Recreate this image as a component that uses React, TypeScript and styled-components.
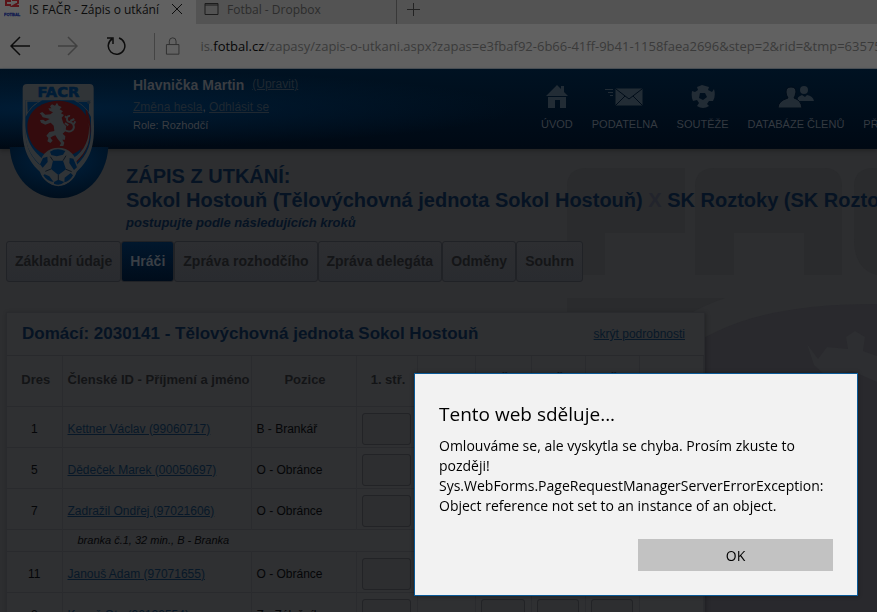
import React from "react";
import styled, { createGlobalStyle } from "styled-components";

const ui = '"Open Sans", "Noto Sans", sans-serif';
const web = '"Liberation Sans", Arial, sans-serif';

const GlobalStyle = createGlobalStyle`
  * { box-sizing: border-box; }
  body { margin: 0; overflow: hidden; background: #2d2e30; }
  button, input { font: inherit; color: inherit; }
`;

const Page = styled.div`
  display: flex;
  flex-direction: column;
  height: 100vh;
  overflow: hidden;
  font-family: ${web};
  font-size: 12px;
  color: #050608;
`;

/* Browser window */
const TabStrip = styled.div`
  display: flex;
  flex: none;
  height: 24px;
  background: #535353;
  font-family: ${ui};
  font-size: 12px;
`;

const BrowserTab = styled.div<{ $active?: boolean }>`
  display: flex;
  align-items: center;
  gap: 8px;
  flex: none;
  width: ${(p) => (p.$active ? 196 : 201)}px;
  padding: 0 0 6px ${(p) => (p.$active ? 4 : 8)}px;
  border-right: ${(p) => (p.$active ? "0" : "1px solid #383838")};
  background: ${(p) => (p.$active ? "#616161" : "none")};
  color: ${(p) => (p.$active ? "#0c0c0c" : "#2c2c2c")};
  white-space: nowrap;
`;

const IconButton = styled.button`
  display: flex;
  align-items: center;
  justify-content: center;
  padding: 0;
  border: 0;
  background: none;
`;

const CloseTab = styled(IconButton)`
  margin-left: 4px;
`;

const NewTab = styled(IconButton)`
  width: 32px;
  height: 18px;
`;

const Toolbar = styled.div`
  display: flex;
  flex: none;
  align-items: center;
  height: 45px;
  background: #616161;
  border-bottom: 1px solid #4a5056;
  font-family: ${ui};
  font-size: 13px;
`;

const NavButton = styled(IconButton)`
  flex: 0 0 48px;
  height: 40px;
  padding-right: 8px;
`;

const Divider = styled.div`
  flex: none;
  width: 1px;
  height: 27px;
  margin: 0 10px;
  background: #444;
`;

const Address = styled.div`
  margin-left: 20px;
  overflow: hidden;
  white-space: nowrap;
  color: #3a3a3a;
  b { font-weight: 400; color: #060606; }
`;

/* Site header */
const Header = styled.header`
  position: relative;
  z-index: 1;
  display: flex;
  flex: none;
  height: 80px;
  padding-left: 133px;
  background: linear-gradient(to bottom, #001222, #000914);
  border-bottom: 1px solid #020a14;
  box-shadow: 0 2px 4px rgba(0, 0, 0, 0.25);
`;

const HeaderGlow = styled.div`
  position: absolute;
  inset: 0 auto 0 0;
  width: 520px;
  background: radial-gradient(ellipse at 10% 50%, rgba(0, 32, 60, 0.8), transparent 70%);
`;

const Logo = styled.svg`
  position: absolute;
  left: 5px;
  top: 6px;
`;

const User = styled.div`
  position: relative;
  flex: 0 0 408px;
  padding-top: 7px;
  color: #3a3d42;
  a { color: #1f2831; }
`;

const UserName = styled.div`
  display: flex;
  gap: 8px;
  height: 20px;
  line-height: 18px;
  font-size: 14px;
  font-weight: 700;
  a { font-size: 12px; font-weight: 400; line-height: 16px; }
`;

const UserLine = styled.div<{ $small?: boolean }>`
  line-height: ${(p) => (p.$small ? 14 : 22)}px;
  font-size: ${(p) => (p.$small ? 11 : 12)}px;
`;

const Menu = styled.nav`
  position: relative;
  display: flex;
  gap: 19px;
  padding-top: 15px;
`;

const MenuLink = styled.a`
  display: flex;
  flex-direction: column;
  align-items: center;
  gap: 9px;
  color: #343a41;
  font-size: 11px;
  line-height: 14px;
  text-decoration: none;
  white-space: nowrap;
  svg { color: #222c35; }
`;

/* Match report */
const Main = styled.main`
  position: relative;
  flex: 1;
  min-height: 0;
  padding: 15px 6px 0;
  background: #2d2e30;
`;

const Watermark = styled.svg`
  position: absolute;
  left: 567px;
  top: 0;
`;

const Titles = styled.div`
  position: relative;
  padding-left: 120px;
  white-space: nowrap;
  color: #061323;
`;

const Title = styled.h1`
  margin: 0;
  font-size: 20px;
  line-height: 24px;
  span { color: #22242c; }
`;

const Hint = styled.p`
  margin: 0;
  font-size: 13px;
  font-weight: 700;
  font-style: italic;
  line-height: 22px;
`;

const Steps = styled.div`
  position: relative;
  display: flex;
  margin-top: 7px;
`;

const Step = styled.button<{ $active?: boolean }>`
  height: 41px;
  padding: 0 8px 2px;
  border: 1px solid #202226;
  border-radius: 3px;
  background: ${(p) => (p.$active ? "linear-gradient(#01172d, #000c1a)" : "linear-gradient(#2d2e31, #292b2f)")};
  color: ${(p) => (p.$active ? "#3a3f45" : "#141517")};
  font-size: 14px;
  font-weight: 700;
  white-space: nowrap;
`;

const Panel = styled.section`
  position: relative;
  max-width: 699px;
  margin-top: 30px;
  border: 1px solid #292a2d;
  background: #2f3032;
  box-shadow: 1px 1px 4px rgba(0, 0, 0, 0.25);
`;

const PanelHead = styled.div`
  display: flex;
  align-items: center;
  justify-content: space-between;
  height: 43px;
  padding: 0 19px 0 15px;
  border-bottom: 1px solid #28292c;
  a { color: #081828; }
`;

const PanelTitle = styled.h2`
  margin: 0;
  font-size: 17px;
  color: #061323;
`;

const Players = styled.table`
  width: 100%;
  table-layout: fixed;
  border-collapse: collapse;
`;

const Th = styled.th<{ $left?: boolean }>`
  height: 50px;
  padding: 0 0 2px ${(p) => (p.$left ? 5 : 3)}px;
  border-right: 1px solid #2a2b2e;
  border-bottom: 1px solid #292a2d;
  color: #131416;
  font-size: 13px;
  text-align: ${(p) => (p.$left ? "left" : "center")};
  white-space: nowrap;
`;

const Row = styled.tr`
  height: 41px;
  border-bottom: 1px solid #292a2d;
`;

const NoteRow = styled(Row)`
  height: 22px;
  font-size: 11px;
  font-style: italic;
`;

const Td = styled.td<{ $center?: boolean }>`
  padding: 4px 0 0 ${(p) => (p.$center ? 0 : 5)}px;
  border-right: 1px solid #2a2b2e;
  text-align: ${(p) => (p.$center ? "center" : "left")};
  white-space: nowrap;
  a { color: #081828; }
`;

const NoteCell = styled.td`
  padding-left: 15px;
`;

const Minute = styled.input`
  display: block;
  width: calc(100% - 6px);
  height: 32px;
  margin: 0;
  border: 1px solid #222326;
  border-radius: 3px;
  background: #2d2e30;
`;

/* Alert */
const Overlay = styled.div`
  position: fixed;
  inset: 0;
  z-index: 2;
  display: flex;
  align-items: flex-end;
  justify-content: flex-end;
  padding: 0 19px 16px;
`;

const Dialog = styled.div`
  display: flex;
  flex-direction: column;
  width: 444px;
  max-width: 100%;
  padding: 26px 24px 24px;
  border: 1px solid #0a5a98;
  background: #f2f2f2;
  color: #000;
  font-family: ${ui};
  box-shadow: 0 0 4px rgba(0, 0, 0, 0.4);
`;

const DialogTitle = styled.h3`
  margin: 0 0 8px;
  font-size: 19px;
  font-weight: 400;
  line-height: 28px;
`;

const Message = styled.p`
  margin: 0 0 23px;
  font-size: 14px;
  line-height: 20px;
`;

const Ok = styled.button`
  align-self: flex-end;
  width: 195px;
  height: 32px;
  border: 0;
  background: #c2c2c2;
  font-size: 14px;
`;

const Stroke = ({ d, w = 20, h = 20, color = "#0c0c0c", sw = 1.5 }: { d: string; w?: number; h?: number; color?: string; sw?: number }) => (
  <svg width={w} height={h} viewBox={`0 0 ${w} ${h}`} fill="none" stroke={color} strokeWidth={sw} aria-hidden="true">
    <path d={d} />
  </svg>
);

const Favicon = () => (
  <svg width="17" height="18" viewBox="0 0 17 18" aria-hidden="true">
    <path d="M7 1H2V5H7M8 0H14V3L9 6H15" fill="none" stroke="#5a1418" strokeWidth="2" />
    <text x="0" y="16" fontFamily="Liberation Sans" fontSize="4" fontWeight="700" fill="#121c50" stroke="#121c50" strokeWidth="0.3">FOTBAL</text>
  </svg>
);

const ClubLogo = () => (
  <Logo width="110" height="130" viewBox="0 0 330 390" role="img" aria-label="FAČR">
    <defs>
      <radialGradient id="badge" cx="0.5" cy="0.25" r="0.75">
        <stop offset="0" stopColor="#00213f" />
        <stop offset="1" stopColor="#000e1c" />
      </radialGradient>
    </defs>
    <path d="M14 216C20 312 88 370 162 370S304 312 310 216Z" fill="url(#badge)" />
    <path d="M53 40Q53 27 66 27H254Q266 27 266 40V130C270 198 264 246 214 292Q196 332 160 334Q124 332 106 292C56 246 50 198 53 130Z" fill="#303437" />
    <text x="160" y="67" textAnchor="middle" fontFamily="DejaVu Sans" fontSize="44" fontWeight="700" fill="#001c36" stroke="#001c36" strokeWidth="2">FACR</text>
    <path d="M61 76H258V150C261 200 251 240 209 275L160 300L111 275C68 240 60 200 61 150Z" fill="#001f3b" />
    <path d="M242 98C270 150 258 235 207 267Q246 210 242 98Z" fill="#340b0d" />
    <path d="M61 76H112Q78 92 62 126ZM258 76H206Q242 92 258 126Z" fill="#303437" />
    <path d="M67 80H101Q80 91 68 112ZM252 80H217Q238 91 252 112Z" fill="#001f3b" />
    <path d="M160 77C218 80 249 113 251 155C253 205 222 245 160 245S68 204 67 155C67 112 102 80 160 77Z" fill="#340b0d" />
    <path d="M61 150C64 205 88 230 116 254L109 272C70 238 58 203 61 150ZM251 142C257 191 238 230 204 250L213 260C246 231 262 193 251 142Z" fill="#303437" />
    <path fill="#303437" d="M141 88L150 92L156 83L161 92L170 96L164 103L174 109L168 115L177 120L170 128L175 145L184 154L181 169L173 176L181 184L180 194L172 194L178 203L175 213L164 213L168 204L158 192L151 181L143 184L136 188L143 197L136 204L127 199L130 189L124 182L133 171L148 168L146 152L137 143L121 149L108 143L105 135L115 134L121 139L134 132L126 130L113 127L109 120L104 115L112 111L121 119L136 118L144 112L134 107L130 100L139 100L135 94Z" />
    <path d="M176 163C195 178 211 164 205 149C199 136 184 147 186 130Q188 121 195 123M190 151L180 144M204 151L211 139M188 131L180 124M196 138L208 132" fill="none" stroke="#303437" strokeWidth="6" />
    <circle cx="160" cy="275" r="57" fill="#303437" />
    <g fill="#001c36">
      <path d="M144 257H174L183 283L160 300L138 282Z" />
      <path d="M135 230Q156 217 181 228L174 239L155 244L139 240ZM114 249L127 245L128 261L113 278L105 268ZM205 251L216 277L207 285L193 264L194 249ZM119 298L133 304L146 321Q126 319 115 301ZM179 308L197 294L204 301Q194 319 178 322ZM147 321L160 314L178 321Q165 334 147 326Z" />
    </g>
    <path d="M138 282L121 289M183 283L200 290M144 257L136 245M174 257L183 242M160 300V316" stroke="#0e1721" strokeWidth="3" />
    <circle cx="251" cy="82" r="5" fill="#182633" />
  </Logo>
);

const HomeIcon = () => (
  <svg width="24" height="24" viewBox="0 0 24 24" fill="currentColor" aria-hidden="true">
    <path d="M12 1L16 5V2H19V8L23 12H1ZM3 13H21V24H15V16H10V24H3Z" />
  </svg>
);
const MailIcon = () => (
  <svg width="40" height="24" viewBox="0 0 40 24" fill="none" stroke="currentColor" aria-hidden="true">
    <path d="M0 5.5H8M3 8.5H8M5 11.5H8" />
    <path d="M11 5H37V21H11Z" fill="currentColor" />
    <path d="M11 5L24 15L37 5M11 21L20 12M37 21L28 12" stroke="#000c19" />
  </svg>
);
const BallIcon = () => (
  <svg width="24" height="24" viewBox="0 0 24 24" fill="currentColor" aria-hidden="true">
    <path fillRule="evenodd" d="M6 3L11 1L18 3L17 6L21 8L23 5Q25 12 22 17L18 17L16 20L18 22Q12 26 6 22L8 19L6 16L2 17Q0 13 1 7L4 8L7 6ZM9 9L8 14L12 16L16 13L14 9Z" />
  </svg>
);
const PeopleIcon = () => (
  <svg width="36" height="24" viewBox="0 0 36 24" fill="currentColor" aria-hidden="true">
    <circle cx="26" cy="6" r="4" />
    <path d="M20 17Q18 13 24 11L27 13L29 11Q35 12 36 17Z" />
    <path d="M8 8Q8 3 13 3T18 8Q17 13 16 14Q23 16 24 24H0Q0 17 10 14Q8 11 8 8Z" stroke="#000c19" />
  </svg>
);

const menu = [
  { label: "ÚVOD", icon: <HomeIcon /> },
  { label: "PODATELNA", icon: <MailIcon /> },
  { label: "SOUTĚŽE", icon: <BallIcon /> },
  { label: "DATABÁZE ČLENŮ", icon: <PeopleIcon /> },
  { label: "PŘESTUPY A REGISTRACE", icon: null },
];

const steps = ["Základní údaje", "Hráči", "Zpráva rozhodčího", "Zpráva delegáta", "Odměny", "Souhrn"];
const columns = ["Dres", "Členské ID - Příjmení a jméno", "Pozice", "1. stř.", "", "Č", "Č", "Č", ""];
const widths = [55, 189, 105, 61, 58, 56, 54, 54];

const players = [
  { no: 1, name: "Kettner Václav (99060717)", position: "B - Brankář" },
  { no: 5, name: "Dědeček Marek (00050697)", position: "O - Obránce" },
  { no: 7, name: "Zadražil Ondřej (97021606)", position: "O - Obránce", note: "branka č.1, 32 min., B - Branka" },
  { no: 11, name: "Janouš Adam (97071655)", position: "O - Obránce" },
  { no: 8, name: "Kuneš Oto (96120554)", position: "Z - Záložník" },
];

export default function App() {
  return (
    <Page>
      <GlobalStyle />
      <TabStrip>
        <BrowserTab $active>
          <Favicon />
          IS FAČR - Zápis o utkání
          <CloseTab aria-label="Zavřít kartu">
            <Stroke w={12} h={12} sw={1} d="M1 1L11 11M11 1L1 11" />
          </CloseTab>
        </BrowserTab>
        <BrowserTab>
          <Stroke w={15} h={14} color="#1c1c1c" sw={1} d="M1 1.5H14V12.5H1ZM1 3H14" />
          Fotbal - Dropbox
        </BrowserTab>
        <NewTab aria-label="Nová karta">
          <Stroke w={13} h={13} sw={1} color="#222" d="M6.5 0V13M0 6.5H13" />
        </NewTab>
      </TabStrip>
      <Toolbar>
        <NavButton aria-label="Zpět">
          <Stroke d="M20 10H1M10 1L1 10L10 19" />
        </NavButton>
        <NavButton aria-label="Vpřed">
          <Stroke color="#404040" d="M0 10H19M10 1L19 10L10 19" />
        </NavButton>
        <NavButton aria-label="Obnovit">
          <Stroke d="M13 2A8.3 8.3 0 1 1 6 3M1 2H7V8" />
        </NavButton>
        <Divider />
        <Stroke w={16} h={20} color="#303030" sw={1} d="M1.5 8.5H14.5V18.5H1.5ZM4.5 8V5A3.5 3.5 0 0 1 11.5 5V8" />
        <Address>
          is.<b>fotbal.cz</b>/zapasy/zapis-o-utkani.aspx?zapas=e3fbaf92-6b66-41ff-9b41-1158faea2696&amp;step=2&amp;rid=&amp;tmp=63575838
        </Address>
      </Toolbar>

      <Header>
        <HeaderGlow />
        <ClubLogo />
        <User>
          <UserName>
            Hlavnička Martin <a href="#upravit">(Upravit)</a>
          </UserName>
          <UserLine>
            <a href="#heslo">Změna hesla</a>, <a href="#odhlasit">Odhlásit se</a>
          </UserLine>
          <UserLine $small>Role: Rozhodčí</UserLine>
        </User>
        <Menu>
          {menu.map((m) => (
            <MenuLink href="#menu" key={m.label}>
              {m.icon ?? <svg width="24" height="24" aria-hidden="true" />}
              {m.label}
            </MenuLink>
          ))}
        </Menu>
      </Header>

      <Main>
        <Watermark width="310" height="463" viewBox="0 0 310 463" fill="#2a2b2d" aria-hidden="true">
          <path d="M0 38Q0 19 20 19H118V84H38V126H0ZM128 126V38Q128 19 148 19H257Q275 19 275 38V126H237V84H167V126ZM287 90V38Q287 19 307 19H310V126Q287 120 287 90Z" />
          <path d="M0 149H158Q140 155 120 166V463H0Z" />
          <path fill="#29292d" d="M110 206C160 170 215 155 310 155V463H110Z" />
          <path fill="#2d2e31" d="M240 195L251 210L260 198L281 200L279 188L288 182L298 188L296 202L310 207V233L285 222L260 228L247 216Z" />
        </Watermark>
        <Titles>
          <Title>
            ZÁPIS Z UTKÁNÍ:
            <br />
            Sokol Hostouň (Tělovýchovná jednota Sokol Hostouň) <span>X</span> SK Roztoky (SK Roztoky)
          </Title>
          <Hint>postupujte podle následujících kroků</Hint>
        </Titles>
        <Steps>
          {steps.map((s, i) => (
            <Step key={s} $active={i === 1}>
              {s}
            </Step>
          ))}
        </Steps>
        <Panel>
          <PanelHead>
            <PanelTitle>Domácí: 2030141 - Tělovýchovná jednota Sokol Hostouň</PanelTitle>
            <a href="#podrobnosti">skrýt podrobnosti</a>
          </PanelHead>
          <Players>
            <colgroup>
              {widths.map((w, i) => (
                <col key={i} width={w} />
              ))}
              <col />
            </colgroup>
            <thead>
              <tr>
                {columns.map((c, i) => (
                  <Th key={i} scope="col" $left={i === 1}>
                    {c}
                  </Th>
                ))}
              </tr>
            </thead>
            <tbody>
              {players.map((p) => (
                <React.Fragment key={p.no}>
                  <Row>
                    <Td $center>{p.no}</Td>
                    <Td>
                      <a href="#hrac">{p.name}</a>
                    </Td>
                    <Td>{p.position}</Td>
                    {widths.slice(3).map((_, i) => (
                      <Td key={i}>{i !== 1 && <Minute aria-label={`${p.name}, údaj ${i + 1}`} />}</Td>
                    ))}
                    <Td />
                  </Row>
                  {p.note && (
                    <NoteRow>
                      <Td />
                      <NoteCell colSpan={8}>{p.note}</NoteCell>
                    </NoteRow>
                  )}
                </React.Fragment>
              ))}
            </tbody>
          </Players>
        </Panel>
      </Main>

      <Overlay>
        <Dialog role="alertdialog" aria-labelledby="alert-title" aria-describedby="alert-text">
          <DialogTitle id="alert-title">Tento web sděluje...</DialogTitle>
          <Message id="alert-text">
            Omlouváme se, ale vyskytla se chyba. Prosím zkuste to později!
            <br />
            Sys.WebForms.PageRequestManagerServerErrorException: Object reference not set to an instance of an object.
          </Message>
          <Ok>OK</Ok>
        </Dialog>
      </Overlay>
    </Page>
  );
}
